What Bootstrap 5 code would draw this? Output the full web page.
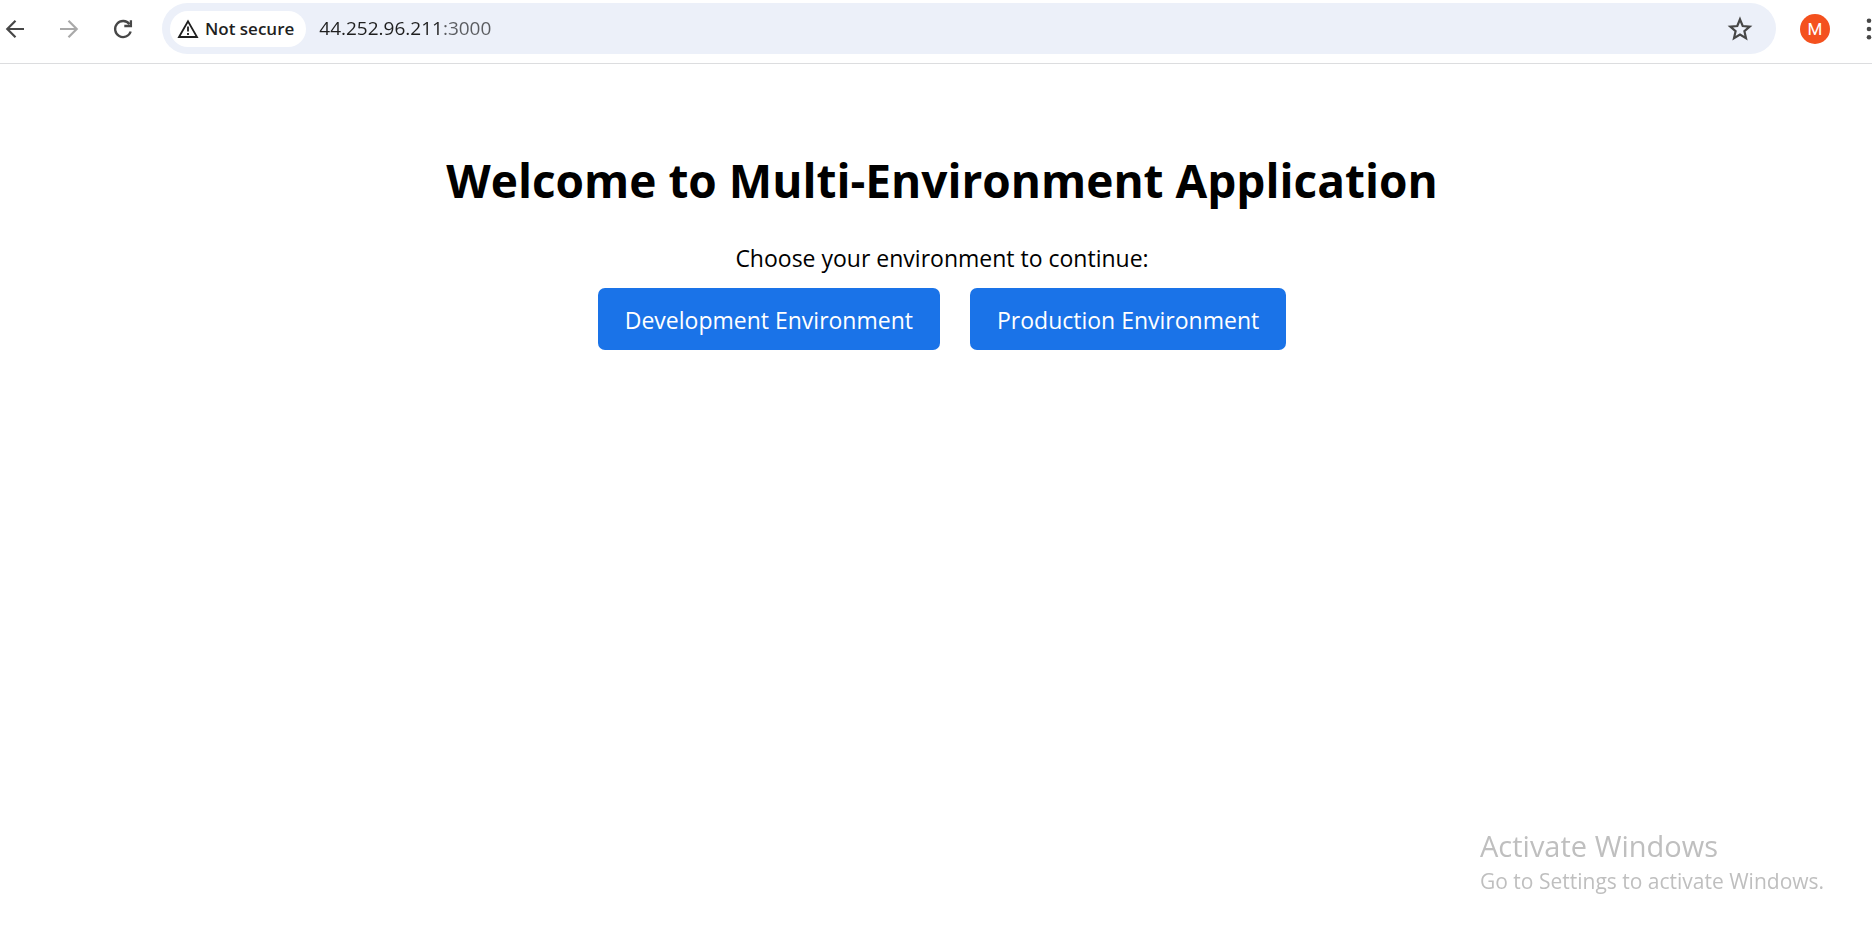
<!DOCTYPE html>
<html lang="en">
<head>
<meta charset="utf-8">
<meta name="viewport" content="width=device-width, initial-scale=1">
<title>Multi-Environment Application</title>
<link href="https://cdn.jsdelivr.net/npm/bootstrap@5.3.0/dist/css/bootstrap.min.css" rel="stylesheet">
<style>
  body { font-family: "Open Sans", "Noto Sans", sans-serif; color: #000; background: #fff; }
  .toolbar { height: 64px; padding: 3px 0 9px; border-bottom: 1px solid #dcdddf; overflow: hidden; }
  .tool-btn { width: 30px; height: 30px; padding: 0; border: 0; color: #474747; line-height: 0; }
  .tool-btn:disabled { color: #a9a9a9; border: 0; opacity: 1; }
  .nav-tools { gap: 24px; width: 162px; }
  .omnibox { height: 51px; background: #ecf0f9; padding: 0 21px 0 8px; }
  .chip { height: 36px; padding: 0 12px 0 7px; gap: 6px; border: 0; background: #fff; color: #1f1f1f; font-size: 17px; font-weight: 600; line-height: 36px; }
  .url { font-size: 19px; padding: 0 0 0 13px; border: 0; outline: 0; min-width: 0; color: transparent;
         background: linear-gradient(90deg, #1f1f1f 137px, #5a5c60 137px); -webkit-background-clip: text; background-clip: text; }
  .avatar { width: 30px; height: 30px; padding: 0; border: 0; background: #f4511e; color: #fff; font: 17px/30px Roboto, sans-serif; margin-left: 24px; }
  .menu-btn { width: 6px; margin-left: 36px; }
  .landing { padding: 84px 0 0 12px; }
  .landing h1 { font-size: 46px; line-height: 64px; font-weight: 700; margin-bottom: 30px; }
  .landing p { font-size: 23px; line-height: 32px; margin-bottom: 14px; }
  .choices { gap: 30px; }
  .env-btn { font-size: 23px; line-height: 32px; padding: 16px 27px 14px; border: 0; border-radius: 7px; background: #1a73e8; color: #fff; }
  .watermark { right: 0; bottom: 44px; width: 392px; color: #bfbfbf; font-size: 21px; line-height: 30px; }
  .watermark strong { font-size: 29px; line-height: 40px; font-weight: 400; }
</style>
</head>
<body class="min-vh-100">
<header class="toolbar d-flex align-items-center">
  <nav class="nav-tools d-flex flex-shrink-0" aria-label="Browser navigation">
    <button class="tool-btn btn" type="button" aria-label="Back">
      <svg width="30" height="30" viewBox="0 0 30 30" fill="none" stroke="currentColor" stroke-width="2.2"><path d="M24 15H7.5M15.5 6.8L7.3 15l8.2 8.2"/></svg>
    </button>
    <button class="tool-btn btn" type="button" aria-label="Forward" disabled>
      <svg width="30" height="30" viewBox="0 0 30 30" fill="none" stroke="currentColor" stroke-width="2.2"><path d="M6 15h16.500M14.500 6.800L22.700 15l-8.200 8.200"/></svg>
    </button>
    <button class="tool-btn btn" type="button" aria-label="Reload">
      <svg width="30" height="30" viewBox="0 0 30 30" fill="none" stroke="currentColor" stroke-width="2.3"><path d="M22.700 17.500A8 8 0 1 1 21.500 10.200"/><path d="M16.300 12h6.600V6.200"/></svg>
    </button>
  </nav>
  <div class="omnibox d-flex align-items-center rounded-pill flex-grow-1">
    <button class="chip d-flex align-items-center rounded-pill flex-shrink-0" type="button">
      <svg width="22" height="20" viewBox="0 0 22 20" fill="none" stroke="#1f1f1f" stroke-width="1.800"><path d="M2 18L11 2.300 20 18z"/><path d="M11 7.500v5M11 14v2"/></svg>
      Not secure
    </button>
    <input class="url flex-grow-1" type="text" value="44.252.96.211:3000" aria-label="Address" spellcheck="false">
    <button class="tool-btn btn" type="button" aria-label="Bookmark this page">
      <svg width="30" height="30" viewBox="0 0 30 30" fill="none" stroke="currentColor" stroke-width="2.200"><path d="M15 5.300l2.700 6.700 7 .6-5.300 4.600 1.600 6.900-6-3.600-6 3.600 1.600-6.900-5.300-4.600 7-.6z"/></svg>
    </button>
  </div>
  <button class="avatar rounded-circle flex-shrink-0" type="button" aria-label="Profile M">M</button>
  <button class="tool-btn menu-btn btn flex-shrink-0" type="button" aria-label="Menu">
    <svg width="6" height="30" viewBox="0 0 6 30" fill="currentColor"><circle cx="3" cy="6.700" r="2.300"/><circle cx="3" cy="15" r="2.300"/><circle cx="3" cy="23.300" r="2.300"/></svg>
  </button>
</header>
<main class="landing text-center">
  <h1>Welcome to Multi-Environment Application</h1>
  <p>Choose your environment to continue:</p>
  <div class="choices d-flex justify-content-center flex-wrap">
    <button class="env-btn" type="button">Development Environment</button>
    <button class="env-btn" type="button">Production Environment</button>
  </div>
</main>
<aside class="watermark position-fixed">
  <strong class="d-block">Activate Windows</strong>
  Go to Settings to activate Windows.
</aside>
<script src="https://cdn.jsdelivr.net/npm/bootstrap@5.3.0/dist/js/bootstrap.bundle.min.js"></script>
</body>
</html>
